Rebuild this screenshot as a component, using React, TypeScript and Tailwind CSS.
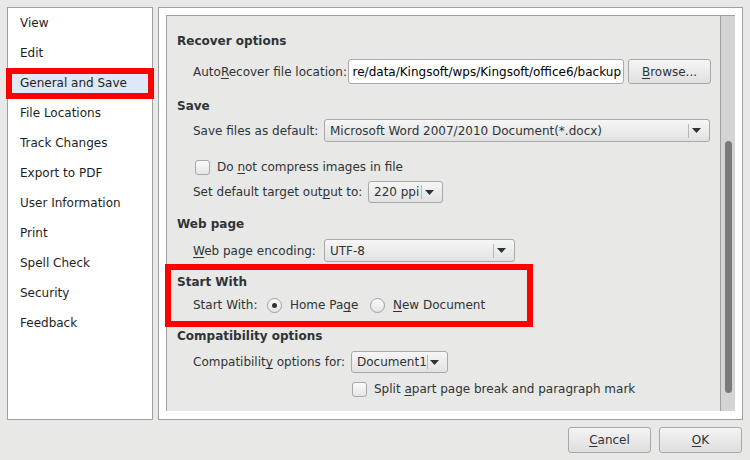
import React from "react";

const Arrow = () => (
  <svg width="9" height="5" viewBox="0 0 9 5" className="block">
    <path d="M0 0 L9 0 L4.5 5 Z" fill="#2e3436" />
  </svg>
);

const Combo = ({ text, w, sepGap = 3 }: { text: string; w: string; sepGap?: number }) => (
  <div
    className={`${w} h-full flex items-center pl-[5px] pr-[8px] rounded-[3px] border border-[#a8a8a8] bg-linear-to-b from-[#f6f6f6] to-[#e2e2e2] text-[#2e3436]`}
  >
    <span className="flex-1 whitespace-nowrap overflow-hidden">{text}</span>
    <span className="w-px h-[14px] bg-[#b8b8b8]" />
    <span style={{ marginLeft: sepGap }}>
      <Arrow />
    </span>
  </div>
);

const Check = () => (
  <span className="w-[15px] h-[15px] rounded-[3px] border border-[#a8a8a8] bg-linear-to-b from-[#fbfbfb] to-[#e6e6e6] shrink-0" />
);

const Radio = ({ on }: { on?: boolean }) => (
  <span className="w-[15px] h-[15px] rounded-full border border-[#a0a0a0] bg-linear-to-b from-[#fbfbfb] to-[#e4e4e4] flex items-center justify-center shrink-0">
    {on && <span className="w-[5px] h-[5px] rounded-full bg-[#2e3436]" />}
  </span>
);

const U = ({ children }: { children: React.ReactNode }) => (
  <span className="underline underline-offset-2 decoration-1">{children}</span>
);

const items = [
  "View",
  "Edit",
  "General and Save",
  "File Locations",
  "Track Changes",
  "Export to PDF",
  "User Information",
  "Print",
  "Spell Check",
  "Security",
  "Feedback",
];

export default function App() {
  return (
    <div className="w-[750px] h-[460px] bg-[#e8e8e7] relative flex flex-col font-['DejaVu_Sans',sans-serif] text-[12px] text-[#2e3436]">
      <div className="flex gap-[5px] pl-[7px] pt-[7px]">
        {/* Left list */}
        <div className="w-[146px] h-[413px] border border-[#a0a0a0] bg-white flex flex-col">
          {items.map((t, i) =>
            i === 2 ? (
              <div key={t} className="h-[30px] mx-[3px] pl-[9px] flex items-center bg-[#dfe8f6] text-[#1e1e1e]">
                {t}
              </div>
            ) : (
              <div key={t} className="h-[30px] pl-[12px] flex items-center text-[#1e1e1e]">
                {t}
              </div>
            )
          )}
        </div>

        {/* Right panel */}
        <div className="w-[585px] h-[413px] border border-[#a0a0a0] bg-white px-[7px] pt-[7px] pb-[8px]">
          <div className="flex h-full border-l border-t border-[#a0a0a0] bg-[#e8e8e7]">
            <div className="flex-1 flex flex-col pl-[10px]">
              <div className="mt-[17px] h-[16px] leading-[16px] font-bold">Recover options</div>
              <div className="mt-[10px] h-[25px] flex items-center pl-[16px]">
                <span className="w-[155px] whitespace-nowrap">
                  Auto<U>R</U>ecover file location:
                </span>
                <div className="w-[276px] h-full rounded-[3px] border border-[#a8a8a8] bg-white flex items-center justify-end overflow-hidden pr-[2px] text-black">
                  <span className="whitespace-nowrap">re/data/Kingsoft/wps/Kingsoft/office6/backup</span>
                </div>
                <div className="ml-[4px] w-[83px] h-full rounded-[3px] border border-[#a8a8a8] bg-linear-to-b from-[#f6f6f6] to-[#e0e0e0] flex items-center justify-center">
                  <span>
                    <U>B</U>rowse...
                  </span>
                </div>
              </div>

              <div className="mt-[14px] h-[16px] leading-[16px] font-bold">Save</div>
              <div className="mt-[5px] h-[23px] flex items-center pl-[16px]">
                <span className="w-[131px] whitespace-nowrap">Save files as default:</span>
                <Combo text="Microsoft Word 2007/2010 Document(*.docx)" w="w-[386px]" />
              </div>
              <div className="mt-[15px] h-[20px] flex items-center pl-[18px]">
                <Check />
                <span className="ml-[7px]">
                  Do <U>n</U>ot compress images in file
                </span>
              </div>
              <div className="mt-[4px] h-[22px] flex items-center pl-[16px]">
                <span className="w-[175px] whitespace-nowrap">
                  Set default target out<U>p</U>ut to:
                </span>
                <Combo text="220 ppi" w="w-[75px]" />
              </div>

              <div className="mt-[13px] h-[16px] leading-[16px] font-bold">Web page</div>
              <div className="mt-[7px] h-[23px] flex items-center pl-[16px]">
                <span className="w-[131px] whitespace-nowrap">
                  <U>W</U>eb page encoding:
                </span>
                <Combo text="UTF-8" w="w-[191px]" />
              </div>

              <div className="mt-[12px] h-[16px] leading-[16px] font-bold">Start With</div>
              <div className="mt-[5px] h-[20px] flex items-center pl-[16px]">
                <span className="w-[74px] whitespace-nowrap">Start With:</span>
                <Radio on />
                <span className="ml-[8px] w-[80px] whitespace-nowrap">
                  Home Pa<U>g</U>e
                </span>
                <Radio />
                <span className="ml-[8px] whitespace-nowrap">
                  <U>N</U>ew Document
                </span>
              </div>

              <div className="mt-[13px] h-[16px] leading-[16px] font-bold">Compatibility options</div>
              <div className="mt-[7px] h-[22px] flex items-center pl-[16px]">
                <span className="w-[158px] whitespace-nowrap">
                  Compatibilit<U>y</U> options for:
                </span>
                <Combo text="Document1" w="w-[97px]" sepGap={2} />
              </div>
              <div className="mt-[6px] h-[20px] flex items-center pl-[175px]">
                <Check />
                <span className="ml-[7px] whitespace-nowrap">
                  Split <U>a</U>part page break and paragraph mark
                </span>
              </div>
            </div>

            {/* Scrollbar */}
            <div className="w-[15px] border-l border-[#a0a0a0] bg-[#d4d4d4] flex justify-center">
              <div className="mt-[125px] w-[7px] h-[252px] rounded-full bg-[#7a7a7a]" />
            </div>
          </div>
        </div>
      </div>

      {/* Bottom buttons */}
      <div className="flex justify-end gap-[8px] pr-[8px] mt-[7px]">
        <div className="w-[83px] h-[26px] rounded-[3px] border border-[#a8a8a8] bg-linear-to-b from-[#f4f4f4] to-[#dedede] flex items-center justify-center">
          <span>
            <U>C</U>ancel
          </span>
        </div>
        <div className="w-[83px] h-[26px] rounded-[3px] border border-[#a8a8a8] bg-linear-to-b from-[#f4f4f4] to-[#dedede] flex items-center justify-center">
          <span>
            <U>O</U>K
          </span>
        </div>
      </div>

      {/* Red annotation boxes */}
      <div className="absolute left-[6px] top-[68px] w-[148px] h-[31px] border-[6px] border-[#ff0000] pointer-events-none" />
      <div className="absolute left-[165px] top-[264px] w-[368px] h-[63px] border-[6px] border-[#ff0000] pointer-events-none" />
    </div>
  );
}
